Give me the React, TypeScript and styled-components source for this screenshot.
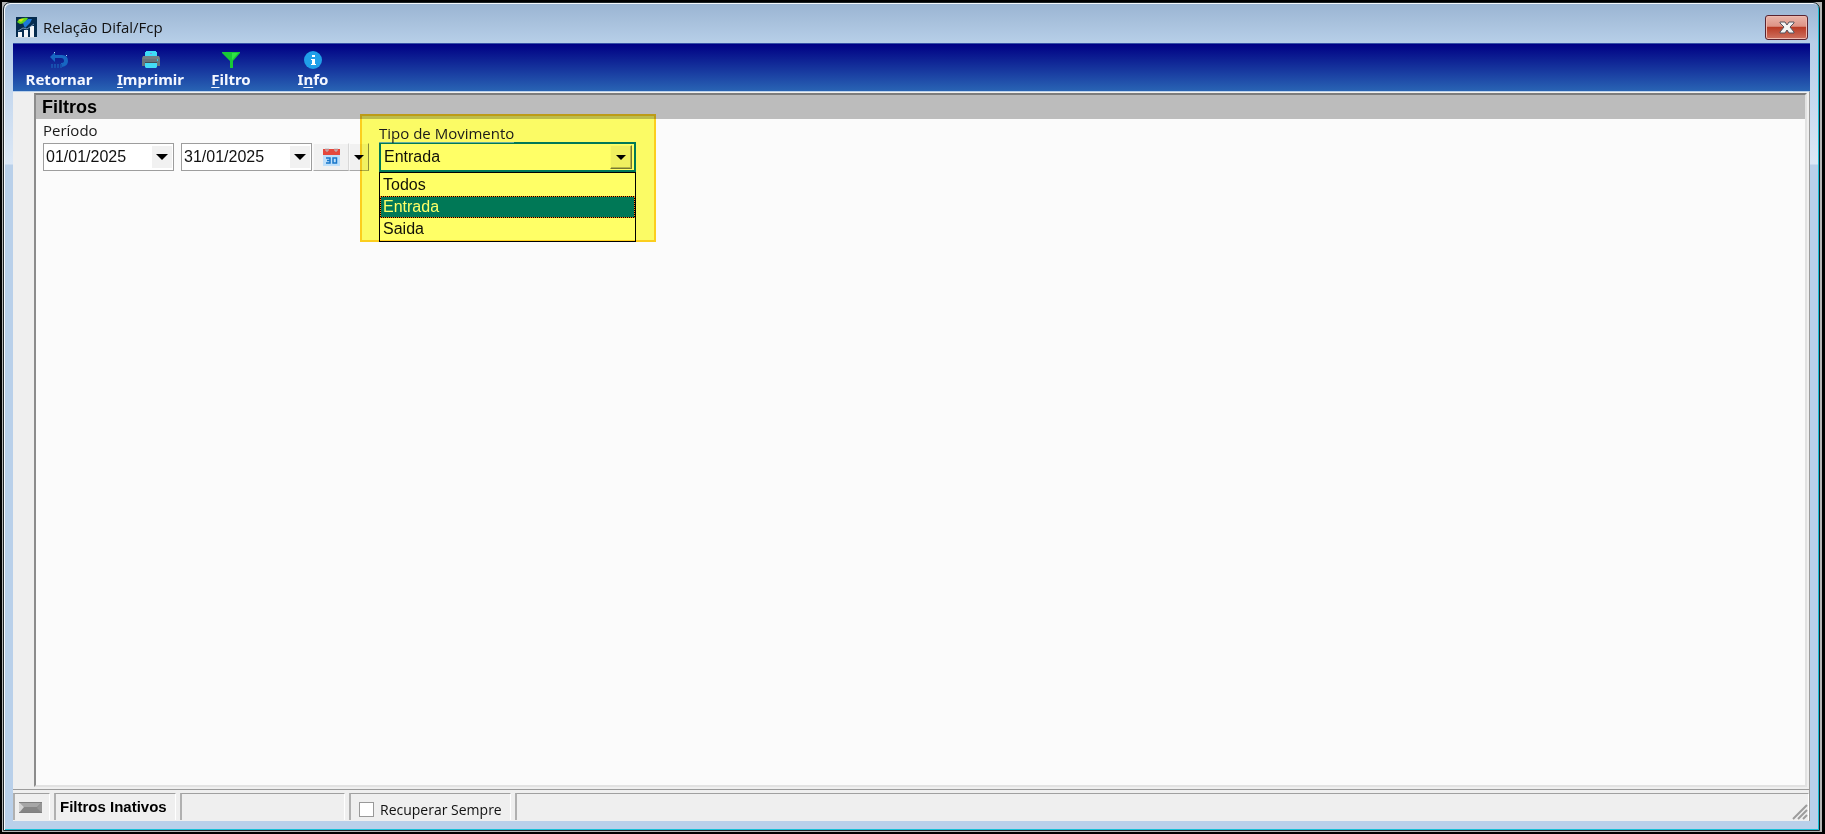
import React, { useState } from "react";
import styled, { createGlobalStyle, css } from "styled-components";

const sans = '"Liberation Sans", Arial, sans-serif';
const ui = '"Open Sans", "Noto Sans", sans-serif';

const GlobalStyle = createGlobalStyle`
  * { box-sizing: border-box; }
  body { margin: 0; background: #000; color: #111; font-family: ${sans}; font-size: 16px; }
  button, input, select { font: inherit; color: inherit; margin: 0; }
`;

const Desktop = styled.div`
  display: flex;
  min-height: 100vh;
  padding: 2px 3px 2px 2px;
  background: #000;
`;

const Backdrop = styled.div`
  display: flex;
  flex: 1;
  padding: 0 2px 1px 1px;
  background: #b4b4b4;
`;

const Window = styled.main`
  display: flex;
  flex: 1;
  flex-direction: column;
  min-width: 0;
  padding: 0 9px 9px;
  border: 1px solid #1c2428;
  border-radius: 7px 7px 0 0;
  background: linear-gradient(#9ab4d2, #b7cfe8 40px, #bbd1eb 60px, #dce8f6 161px, #b9d0ea 162px);
  box-shadow: inset 1px 1px 0 #f4f8fc, inset -1px -1px 0 #18bfd6;
`;

const TitleBar = styled.header`
  display: flex;
  align-items: center;
  gap: 6px;
  height: 40px;
  padding: 8px 2px 0 3px;
`;

const Title = styled.h1`
  flex: 1;
  margin: 0;
  font: 400 15px/20px ${ui};
`;

const CloseButton = styled.button`
  display: grid;
  place-items: center;
  width: 43px;
  height: 25px;
  padding: 0;
  border: 1px solid #5a2430;
  border-radius: 3px;
  background: linear-gradient(#eab5aa, #dd9385 45%, #b93a24 48%, #cf7260);
  box-shadow: inset 0 0 0 1px #efb9ae;
`;

const Toolbar = styled.nav`
  display: flex;
  height: 48px;
  border-top: 1px solid #3550a8;
  background: linear-gradient(#000084, #2964b4);
`;

const ToolButton = styled.button<{ $width: number }>`
  display: flex;
  flex-direction: column;
  align-items: center;
  width: ${(p) => p.$width}px;
  padding: 7px 0 0;
  border: 0;
  background: none;
  color: #f4f7ff;
  font: 700 15px/20px "Noto Sans", sans-serif;
  white-space: nowrap;
  svg { display: block; }
  u { text-underline-offset: 2px; }
`;

const Client = styled.div`
  display: flex;
  flex: 1;
  flex-direction: column;
  background: #efefef;
  border-top: 1px solid #b9d0ea;
  border-right: 1px solid #9c9c9c;
`;

const Panel = styled.section`
  flex: 1;
  margin: 1px 2px 2px 21px;
  border: 2px solid;
  border-color: #7d7d7d #e2e2e2 #e2e2e2 #8c8c8c;
  background: #fbfbfb;
`;

const PanelTitle = styled.h2`
  margin: 0;
  padding: 0 6px;
  background: #bcbcbc;
  font: 700 18px/24px ${sans};
  color: #000;
`;

const Filters = styled.form`
  display: flex;
  align-items: flex-start;
  gap: 10px;
  padding: 1px 7px 0;
`;

const Period = styled.fieldset`
  margin: 0;
  padding: 0;
  border: 0;
  min-width: 0;
`;

const legendText = css`
  font: 400 15px/20px ${ui};
  color: #1a1a1a;
`;

const Legend = styled.legend`
  ${legendText}
  padding: 0;
  margin-bottom: 3px;
`;

const PeriodRow = styled.div`
  display: flex;
`;

const DateBox = styled.div`
  display: flex;
  width: 131px;
  height: 28px;
  margin-right: 7px;
  border: 1px solid #9d9d9d;
  background: #fff;
  &:nth-of-type(2) { margin-right: 1px; }
`;

const DateInput = styled.input`
  flex: 1;
  min-width: 0;
  padding: 0 0 1px 2px;
  border: 0;
  outline: 0;
  background: none;
  font: 400 16px/24px ${sans};
`;

const ArrowButton = styled.button`
  display: grid;
  place-items: center;
  width: 20px;
  margin: 2px 1px;
  padding: 0;
  border: 0;
  background: #f1f1f1;
`;

const RaisedButton = styled.button<{ $width: number }>`
  display: grid;
  place-items: center;
  width: ${(p) => p.$width}px;
  height: 28px;
  padding: 0;
  border: 1px solid;
  border-color: #fbfbfb #d8d8d8 #a8a8a8 #f8f8f8;
  background: #f1f1f1;
  &:last-child { border-right-color: #8c8c8c; }
`;

const Movement = styled.div`
  position: relative;
  width: 257px;
  padding-top: 3px;
  &::after {
    content: "";
    position: absolute;
    inset: -6px -20px 0 -19px;
    border: 2px solid #ffd21e;
    background: #ffff66;
    background-clip: padding-box;
    mix-blend-mode: multiply;
    pointer-events: none;
  }
`;

const MovementLabel = styled.label`
  ${legendText}
  position: relative;
  z-index: 1;
  display: block;
  width: max-content;
  margin-bottom: -1px;
  background: linear-gradient(transparent 19px, #ffffff66 19px);
`;

const Combo = styled.div`
  display: flex;
  height: 30px;
  border: 2px solid #0078d7;
  background: #fff;
`;

const ComboSelect = styled.select`
  appearance: none;
  flex: 1;
  min-width: 0;
  padding: 0 0 1px 3px;
  border: 0;
  outline: 0;
  background: none;
`;

const ComboButton = styled.button`
  display: grid;
  place-items: center;
  width: 22px;
  margin: 1px 2px 1px 0;
  padding: 0;
  border: 1px solid;
  border-color: #fafafa #777 #777 #fafafa;
  background: #efefef;
  box-shadow: inset -1px -1px 0 #b4b4b4;
`;

const OptionList = styled.ul`
  margin: 0;
  padding: 1px 0;
  border: 1px solid #000;
  background: #fff;
  list-style: none;
`;

const Option = styled.li<{ $active: boolean }>`
  height: 22px;
  padding-left: 3px;
  line-height: 22px;
  ${(p) =>
    p.$active &&
    css`
      border: 1px dotted #ff8728;
      padding-left: 2px;
      line-height: 20px;
      background: #000;
      box-shadow: inset 0 0 0 30px #0078d7;
      color: #fff;
    `}
`;

const StatusBar = styled.footer`
  display: flex;
  gap: 4px;
  height: 32px;
  padding: 3px 0 1px;
  border-top: 1px solid #9c9c9c;
`;

const StatusCell = styled.div<{ $width?: number }>`
  display: flex;
  align-items: center;
  justify-content: flex-start;
  ${(p) => (p.$width ? `width: ${p.$width}px;` : "flex: 1; justify-content: flex-end; align-items: flex-end;")}
  padding-left: 4px;
  border-top: 1px solid #a0a0a0;
  border-left: 2px solid #b0b0b0;
  border-right: 1px solid #fff;
  background: #efefef;
  white-space: nowrap;
`;

const StatusText = styled.strong`
  font: 700 15px/20px ${sans};
  color: #000;
`;

const CheckLabel = styled.label`
  display: flex;
  align-items: center;
  gap: 6px;
  padding: 5px 0 0 4px;
  font: 400 14px/18px ${ui};
`;

const CheckBox = styled.input`
  appearance: none;
  width: 15px;
  height: 15px;
  border: 1px solid #999;
  background: #fff;
  &:checked { background: #0078d7; }
`;

const AppLogo = () => (
  <svg width="21" height="21" viewBox="0 0 21 21" aria-hidden="true">
    <rect width="21" height="21" fill="#062c4f" />
    <path d="M1 5q4-5 11-4l-3 5-5 1z" fill="#62d51e" />
    <path d="M2 3q3-2 6-1L5 5z" fill="#d7e51b" />
    <path d="M7 6l5-4 4 0-2 4-5 5-1-2z" fill="#1c78d8" />
    <path d="M2 15h4v5H2zM8 13h4v7H8zM14 9h4v11h-4z" fill="#f2f5f8" />
    <path d="M2 14l5-3 4 1 7-5" fill="none" stroke="#6f93b5" strokeWidth="1" />
    <path d="M0 20h21v1H0z" fill="#c9d6e2" />
  </svg>
);

const BackIcon = () => (
  <svg width="20" height="18" viewBox="0 0 20 18" aria-hidden="true">
    <path d="M1 6l5-5v3h7q6 0 6 6 0 5-6 6h-1v-4q3 0 3-2 0-3-3-3H6v4z" fill="#1766c2" />
    <path d="M3 13v4M6 13v4M9 13v4M12 13v4" stroke="#174fae" strokeWidth="2" />
    <path d="M5 1h1v1H5zM17 4h1v1h-1z" fill="#b6d8f5" />
  </svg>
);

const PrinterIcon = () => (
  <svg width="20" height="18" viewBox="0 0 20 18" aria-hidden="true">
    <path d="M5 0h10v1h1v5H4V1h1z" fill="#3fdcf6" />
    <path d="M9 2h2v1H9z" fill="#7b8fe0" />
    <path d="M2 5h16l1 2v8H1V7z" fill="#68757c" />
    <path d="M2 5h16v3H2z" fill="#737f84" />
    <path d="M4 12h12v4l-1 1H5l-1-1z" fill="#43dcf7" />
    <path d="M4 11h12v1H4z" fill="#424f55" />
    <path d="M16 8h1v2h-1z" fill="#31c4e4" />
  </svg>
);

const FunnelIcon = () => (
  <svg width="20" height="18" viewBox="0 0 20 18" aria-hidden="true">
    <path d="M1 1h18v1l-7 8v7H9v-7L1 2z" fill="#18c936" />
    <path d="M11 2h6l-6 7z" fill="#30e346" />
  </svg>
);

const InfoIcon = () => (
  <svg width="20" height="18" viewBox="0 0 20 18" aria-hidden="true">
    <circle cx="10" cy="9" r="9" fill="#209fe9" />
    <path d="M9 4h3v2H9zM8 8h4v5h1v1H8v-1h1V9H8z" fill="#fff" />
  </svg>
);

const CalendarIcon = () => (
  <svg width="17" height="18" viewBox="0 0 17 18" aria-hidden="true">
    <path d="M0 1h17v6H0z" fill="#e5483c" />
    <path d="M0 7h17v11H0z" fill="#bfe0fa" />
    <path d="M3 0v3h2V0M12 0v3h2V0" fill="none" stroke="#b7c4cc" strokeWidth="1" />
    <path
      d="M3 10h4v5H3M4 12.500h3M10 10h3.500v5H10z"
      fill="none"
      stroke="#1976c9"
      strokeWidth="1.500"
    />
  </svg>
);

const Triangle = ({ size = 12 }: { size?: number }) => (
  <svg width={size} height={size / 2} viewBox="0 0 12 6" aria-hidden="true">
    <path d="M0 0h12L6 6z" fill="#000" />
  </svg>
);

const CloseIcon = () => (
  <svg width="16" height="13" viewBox="0 0 16 13" aria-hidden="true">
    <path
      d="M1 1h5l2 3 2-3h5v1l-4 4 4 5v1h-5L8 9l-2 3H1v-1l4-5-4-4z"
      fill="#f4f4f4"
      stroke="#55535d"
      strokeWidth="1"
    />
  </svg>
);

const Lamp = () => (
  <svg width="23" height="11" viewBox="0 0 23 11" aria-hidden="true">
    <path d="M0 0h23v11H0z" fill="#858585" />
    <path d="M0 0h23l-5 5H5z" fill="#a6a6a6" />
    <path d="M0 0l5 5-5 6z" fill="#d4d4d4" />
    <path d="M23 0v11l-5-5z" fill="#959595" />
    <path d="M0 0h23v1H0zM0 10h23v1H0z" fill="#808080" />
  </svg>
);

const Grip = () => (
  <svg width="16" height="16" viewBox="0 0 16 16" aria-hidden="true">
    <path d="M1 15L15 1M6 15l9-9M11 15l4-4" stroke="#9c9c9c" strokeWidth="2" />
  </svg>
);

const options = ["Todos", "Entrada", "Saida"];

export default function App() {
  const [kind, setKind] = useState("Entrada");
  return (
    <>
      <GlobalStyle />
      <Desktop>
        <Backdrop>
          <Window>
            <TitleBar>
              <AppLogo />
              <Title>Relação Difal/Fcp</Title>
              <CloseButton aria-label="Fechar"><CloseIcon /></CloseButton>
            </TitleBar>
            <Toolbar>
              <ToolButton $width={92}><BackIcon /><span>Retornar</span></ToolButton>
              <ToolButton $width={91}><PrinterIcon /><span><u>I</u>mprimir</span></ToolButton>
              <ToolButton $width={70}><FunnelIcon /><span><u>F</u>iltro</span></ToolButton>
              <ToolButton $width={94}><InfoIcon /><span>I<u>n</u>fo</span></ToolButton>
            </Toolbar>
            <Client>
              <Panel>
                <PanelTitle>Filtros</PanelTitle>
                <Filters onSubmit={(e) => e.preventDefault()}>
                  <Period>
                    <Legend>Período</Legend>
                    <PeriodRow>
                      <DateBox>
                        <DateInput aria-label="Data inicial" defaultValue="01/01/2025" />
                        <ArrowButton type="button" aria-label="Escolher data inicial"><Triangle /></ArrowButton>
                      </DateBox>
                      <DateBox>
                        <DateInput aria-label="Data final" defaultValue="31/01/2025" />
                        <ArrowButton type="button" aria-label="Escolher data final"><Triangle /></ArrowButton>
                      </DateBox>
                      <RaisedButton type="button" $width={36} aria-label="Calendário"><CalendarIcon /></RaisedButton>
                      <RaisedButton type="button" $width={20} aria-label="Mais períodos"><Triangle size={10} /></RaisedButton>
                    </PeriodRow>
                  </Period>
                  <Movement>
                    <MovementLabel htmlFor="kind">Tipo de Movimento</MovementLabel>
                    <Combo>
                      <ComboSelect id="kind" value={kind} onChange={(e) => setKind(e.target.value)}>
                        {options.map((o) => <option key={o}>{o}</option>)}
                      </ComboSelect>
                      <ComboButton type="button" aria-label="Abrir lista"><Triangle size={10} /></ComboButton>
                    </Combo>
                    <OptionList role="listbox" aria-label="Tipo de Movimento">
                      {options.map((o) => (
                        <Option key={o} role="option" aria-selected={o === kind} $active={o === kind} onClick={() => setKind(o)}>
                          {o}
                        </Option>
                      ))}
                    </OptionList>
                  </Movement>
                </Filters>
              </Panel>
              <StatusBar>
                <StatusCell $width={37}><Lamp /></StatusCell>
                <StatusCell $width={122}><StatusText>Filtros Inativos</StatusText></StatusCell>
                <StatusCell $width={165} />
                <StatusCell $width={162}>
                  <CheckLabel><CheckBox type="checkbox" />Recuperar Sempre</CheckLabel>
                </StatusCell>
                <StatusCell><Grip /></StatusCell>
              </StatusBar>
            </Client>
          </Window>
        </Backdrop>
      </Desktop>
    </>
  );
}
